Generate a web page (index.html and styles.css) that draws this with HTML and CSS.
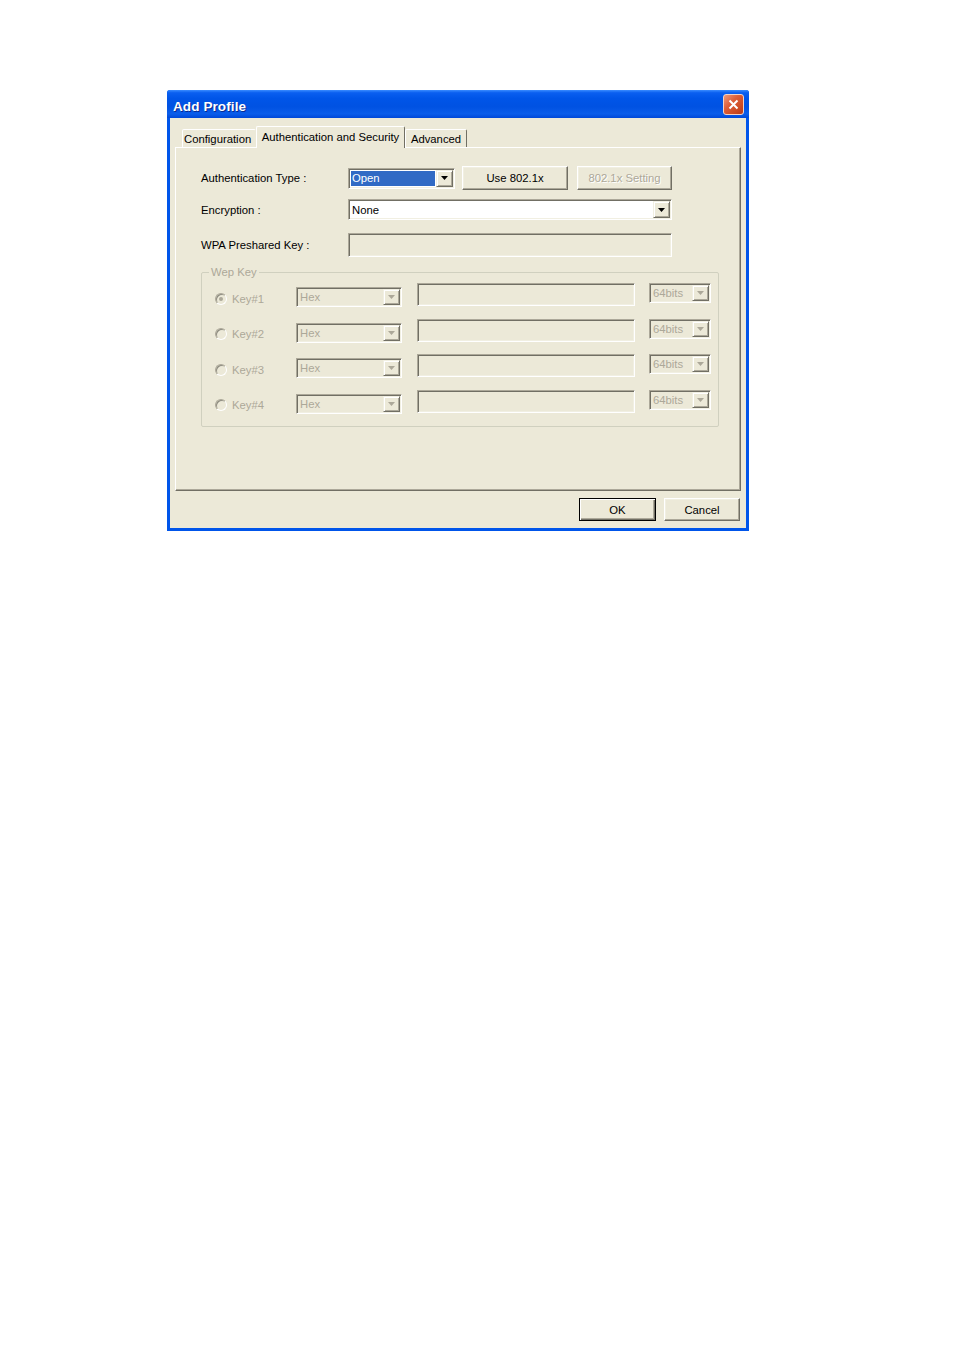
FILE: index.html
```html
<!DOCTYPE html>
<html lang="en">
<head>
<meta charset="utf-8">
<title>Add Profile</title>
<link rel="stylesheet" href="styles.css">
</head>
<body>
<div class="dialog">
  <div class="titlebar">
    <span class="title">Add Profile</span>
    <span class="close-btn" aria-label="Close">
      <svg width="11" height="11" viewBox="0 0 11 11"><path d="M1.5 1.5 L9.5 9.5 M9.5 1.5 L1.5 9.5" stroke="#fff" stroke-width="2" fill="none"/></svg>
    </span>
  </div>
  <div class="client">
    <div class="tabs">
      <div class="tab tab-config">Configuration</div>
      <div class="tab tab-auth active">Authentication and Security</div>
      <div class="tab tab-adv">Advanced</div>
    </div>
    <div class="panel">
      <div class="form-row row-auth">
        <span class="label">Authentication Type :</span>
        <div class="combo combo-auth">
          <span class="combo-value selected">Open</span>
          <span class="combo-arrow"><svg width="7" height="4" viewBox="0 0 7 4"><path d="M0 0 H7 L3.5 4 Z" fill="#000"/></svg></span>
        </div>
        <button class="btn btn-use" type="button">Use 802.1x</button>
        <button class="btn btn-setting" type="button" disabled>802.1x Setting</button>
      </div>
      <div class="form-row row-enc">
        <span class="label">Encryption :</span>
        <div class="combo combo-enc">
          <span class="combo-value">None</span>
          <span class="combo-arrow"><svg width="7" height="4" viewBox="0 0 7 4"><path d="M0 0 H7 L3.5 4 Z" fill="#000"/></svg></span>
        </div>
      </div>
      <div class="form-row row-wpa">
        <span class="label">WPA Preshared Key :</span>
        <div class="edit edit-wpa"></div>
      </div>

      <fieldset class="wep-group">
        <legend>Wep Key</legend>
        <div class="wep-rows">
          <div class="wep-row">
            <span class="wep-opt"><span class="radio checked"></span><span class="key-label">Key#1</span></span>
            <div class="combo combo-hex disabled"><span class="combo-value">Hex</span><span class="combo-arrow"><svg width="7" height="4" viewBox="0 0 7 4"><path d="M0 0 H7 L3.5 4 Z" fill="#ACA899"/></svg></span></div>
            <div class="edit edit-key"></div>
            <div class="combo combo-bits disabled"><span class="combo-value">64bits</span><span class="combo-arrow"><svg width="7" height="4" viewBox="0 0 7 4"><path d="M0 0 H7 L3.5 4 Z" fill="#ACA899"/></svg></span></div>
          </div>
          <div class="wep-row">
            <span class="wep-opt"><span class="radio"></span><span class="key-label">Key#2</span></span>
            <div class="combo combo-hex disabled"><span class="combo-value">Hex</span><span class="combo-arrow"><svg width="7" height="4" viewBox="0 0 7 4"><path d="M0 0 H7 L3.5 4 Z" fill="#ACA899"/></svg></span></div>
            <div class="edit edit-key"></div>
            <div class="combo combo-bits disabled"><span class="combo-value">64bits</span><span class="combo-arrow"><svg width="7" height="4" viewBox="0 0 7 4"><path d="M0 0 H7 L3.5 4 Z" fill="#ACA899"/></svg></span></div>
          </div>
          <div class="wep-row">
            <span class="wep-opt"><span class="radio"></span><span class="key-label">Key#3</span></span>
            <div class="combo combo-hex disabled"><span class="combo-value">Hex</span><span class="combo-arrow"><svg width="7" height="4" viewBox="0 0 7 4"><path d="M0 0 H7 L3.5 4 Z" fill="#ACA899"/></svg></span></div>
            <div class="edit edit-key"></div>
            <div class="combo combo-bits disabled"><span class="combo-value">64bits</span><span class="combo-arrow"><svg width="7" height="4" viewBox="0 0 7 4"><path d="M0 0 H7 L3.5 4 Z" fill="#ACA899"/></svg></span></div>
          </div>
          <div class="wep-row">
            <span class="wep-opt"><span class="radio"></span><span class="key-label">Key#4</span></span>
            <div class="combo combo-hex disabled"><span class="combo-value">Hex</span><span class="combo-arrow"><svg width="7" height="4" viewBox="0 0 7 4"><path d="M0 0 H7 L3.5 4 Z" fill="#ACA899"/></svg></span></div>
            <div class="edit edit-key"></div>
            <div class="combo combo-bits disabled"><span class="combo-value">64bits</span><span class="combo-arrow"><svg width="7" height="4" viewBox="0 0 7 4"><path d="M0 0 H7 L3.5 4 Z" fill="#ACA899"/></svg></span></div>
          </div>
        </div>
      </fieldset>
    </div>
    <div class="footer">
      <button class="btn btn-ok" type="button">OK</button>
      <button class="btn btn-cancel" type="button">Cancel</button>
    </div>
  </div>
</div>
</body>
</html>
```

FILE: styles.css
```css
html, body {
  margin: 0;
  padding: 0;
  background: #ffffff;
}

body {
  font-family: "Liberation Sans", Arial, sans-serif;
  font-size: 11.3px;
  color: #000;
}

.dialog {
  margin: 90px 0 0 167px;
  width: 582px;
  height: 441px;
  box-sizing: border-box;
  background: #0055EA;
  border-radius: 3px 3px 0 0;
  display: flex;
  flex-direction: column;
}

/* ---------- title bar ---------- */
.titlebar {
  height: 28px;
  flex: none;
  display: flex;
  align-items: center;
  justify-content: space-between;
  padding: 0 5px 0 6px;
  border-radius: 3px 3px 0 0;
  background: linear-gradient(to bottom,
    #3A8CFF 0%,
    #0A5FF0 10%,
    #0055E8 30%,
    #0052E2 60%,
    #0A5DEA 85%,
    #0048D8 100%);
}

.title {
  color: #fff;
  font-weight: bold;
  font-size: 13.5px;
  padding-top: 4px;
  text-shadow: 1px 1px 0 #0A2A90;
  letter-spacing: 0.1px;
}

.close-btn {
  width: 21px;
  height: 21px;
  box-sizing: border-box;
  border: 1px solid #F3D3C6;
  border-radius: 3px;
  background: linear-gradient(135deg, #EE9A7C 0%, #DC5E38 40%, #CC4A22 75%, #B8391A 100%);
  display: flex;
  align-items: center;
  justify-content: center;
  margin-top: 1px;
}

/* ---------- client area ---------- */
.client {
  flex: 1;
  margin: 0 3px 3px;
  background: #ECE9D8;
  padding: 8px 5px 0;
  display: flex;
  flex-direction: column;
}

.tabs {
  display: flex;
  align-items: flex-end;
  height: 22px;
  margin: 0 0 -1px 7px;
  position: relative;
  z-index: 1;
}

.tab {
  height: 18px;
  margin-bottom: 1px;
  box-sizing: border-box;
  border-top: 1px solid #fff;
  border-left: 1px solid #fff;
  border-right: 1px solid #716F64;
  border-radius: 2px 2px 0 0;
  background: #ECE9D8;
  display: flex;
  align-items: center;
  justify-content: center;
  padding-top: 1px;
  white-space: nowrap;
}

.tab-config {
  width: 74px;
  border-right-color: transparent;
  justify-content: flex-start;
  padding-left: 1px;
}

.tab-auth {
  width: 149px;
}

.tab-adv {
  width: 62px;
}

.tab.active {
  height: 22px;
  margin-bottom: 0;
  padding-top: 0;
  padding-bottom: 2px;
}

.panel {
  flex: 1;
  box-sizing: border-box;
  border: 1px solid;
  border-color: #fff #716F64 #716F64 #fff;
  box-shadow: inset -1px -1px 0 #ACA899;
  padding: 18px 0 0 25px;
  display: flex;
  flex-direction: column;
}

/* ---------- form rows ---------- */
.form-row {
  display: flex;
  align-items: center;
  flex: none;
}

.label {
  width: 147px;
  flex: none;
  white-space: nowrap;
}

.row-auth { height: 24px; }
.row-enc { height: 21px; margin-top: 9px; }
.row-wpa { height: 24px; margin-top: 13px; }

/* sunken edit / combo */
.combo,
.edit {
  box-sizing: border-box;
  border: 1px solid;
  border-color: #ACA899 #fff #fff #ACA899;
  box-shadow: inset 1px 1px 0 #716F64, inset -1px -1px 0 #F1EFE2;
  padding: 1px;
  background: #fff;
  flex: none;
}

.combo {
  display: flex;
  align-items: stretch;
}

.combo-value {
  flex: 1;
  margin: 1px;
  padding-left: 1px;
  display: flex;
  align-items: center;
  white-space: nowrap;
  overflow: hidden;
}

.combo-value.selected {
  background: #316AC5;
  color: #fff;
}

.combo-arrow {
  width: 17px;
  flex: none;
  box-sizing: border-box;
  background: #ECE9D8;
  border: 1px solid;
  border-color: #F1EFE2 #716F64 #716F64 #F1EFE2;
  box-shadow: inset 1px 1px 0 #fff, inset -1px -1px 0 #ACA899;
  display: flex;
  align-items: center;
  justify-content: center;
}

.combo-auth {
  width: 107px;
  height: 21px;
}

.combo-enc {
  width: 324px;
  height: 21px;
}

.edit-wpa {
  width: 324px;
  height: 24px;
  background: #ECE9D8;
}

/* raised buttons */
.btn {
  font: inherit;
  color: #000;
  box-sizing: border-box;
  padding: 0;
  margin: 0;
  background: #ECE9D8;
  border: 1px solid;
  border-color: #fff #716F64 #716F64 #fff;
  box-shadow: inset -1px -1px 0 #ACA899, inset 1px 1px 0 #F1EFE2;
  border-radius: 0;
  flex: none;
  white-space: nowrap;
}

.btn:disabled {
  color: #ACA899;
  text-shadow: 1px 1px 0 #fff;
}

.btn-use {
  width: 106px;
  height: 24px;
  margin-left: 7px;
}

.btn-setting {
  width: 95px;
  height: 24px;
  margin-left: 9px;
}

/* ---------- wep group ---------- */
.wep-group {
  margin: 9px 0 0 0;
  width: 518px;
  box-sizing: border-box;
  border: 1px solid #D0D0BF;
  border-radius: 2px;
  padding: 4px 6px 13px 13px;
  min-width: 0;
  flex: none;
}

.wep-group legend {
  color: #ACA899;
  padding: 0 2px;
  margin-left: -6px;
  line-height: 13px;
}

.wep-rows {
  display: grid;
  grid-auto-rows: 23px;
  row-gap: 12.6px;
}

.wep-row {
  display: flex;
  align-items: flex-start;
}

.wep-opt {
  width: 81px;
  height: 13px;
  margin-top: 9px;
  display: flex;
  align-items: center;
  flex: none;
  color: #ACA899;
}

.radio {
  width: 12px;
  height: 12px;
  box-sizing: border-box;
  border-radius: 50%;
  border: 1px solid;
  border-color: #ACA899 #fff #fff #ACA899;
  box-shadow: inset 1px 1px 0 #8E8C80;
  background: #ECE9D8;
  display: flex;
  align-items: center;
  justify-content: center;
  flex: none;
}

.radio.checked::after {
  content: "";
  width: 4px;
  height: 4px;
  border-radius: 50%;
  background: #ACA899;
}

.key-label {
  margin-left: 5px;
  white-space: nowrap;
}

.combo.disabled {
  background: #ECE9D8;
  color: #ACA899;
}

.combo-hex {
  width: 106px;
  height: 20px;
  margin-top: 4px;
}

.edit-key {
  width: 218px;
  height: 23px;
  margin-left: 15px;
  background: #ECE9D8;
}

.combo-bits {
  width: 62px;
  height: 20px;
  margin-left: 14px;
}

/* ---------- footer ---------- */
.footer {
  display: flex;
  justify-content: flex-end;
  gap: 8px;
  padding: 7px 1px 7px 0;
  flex: none;
}

.btn-ok {
  width: 77px;
  height: 23px;
  border: 1px solid #000;
  box-shadow: inset 1px 1px 0 #fff, inset -1px -1px 0 #716F64, inset -2px -2px 0 #ACA899;
}

.btn-cancel {
  width: 76px;
  height: 23px;
}
```
